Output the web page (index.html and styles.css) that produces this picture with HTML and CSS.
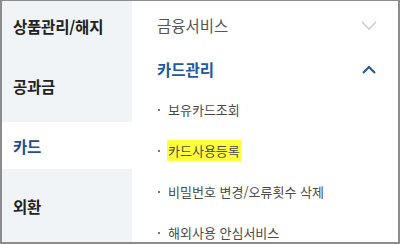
FILE: index.html
```html
<!DOCTYPE html>
<html lang="ko">
<head>
<meta charset="utf-8">
<link rel="stylesheet" href="styles.css">
</head>
<body>
<div class="frame">
  <nav class="side">
    <div class="side-item">상품관리/해지</div>
    <div class="side-item">공과금</div>
    <div class="side-item active">카드</div>
    <div class="side-item">외환</div>
  </nav>
  <section class="main">
    <div class="row">
      <span class="row-title">금융서비스</span>
      <svg class="chev" width="16" height="9" viewBox="0 0 16 9"><polyline points="1,1 8,8 15,1" fill="none" stroke="#c4c7cc" stroke-width="1.4"/></svg>
    </div>
    <div class="row open">
      <span class="row-title">카드관리</span>
      <svg class="chev" width="16" height="9" viewBox="0 0 16 9"><polyline points="2,8 8,2 14,8" fill="none" stroke="#24528f" stroke-width="2"/></svg>
    </div>
    <ul class="sub">
      <li><span class="dot"></span><span>보유카드조회</span></li>
      <li><span class="dot"></span><span class="hl">카드사용등록</span></li>
      <li><span class="dot"></span><span>비밀번호 변경/오류횟수 삭제</span></li>
      <li><span class="dot"></span><span>해외사용 안심서비스</span></li>
    </ul>
  </section>
</div>
</body>
</html>
```
FILE: styles.css
```css
html, body {
  margin: 0;
  padding: 0;
  background: #fff;
}
.frame {
  width: 400px;
  height: 244px;
  box-sizing: border-box;
  border: 2px solid #8c8c8c;
  border-top-width: 1px;
  display: flex;
  overflow: hidden;
  font-family: "Noto Sans CJK KR", "Noto Sans", sans-serif;
}
.side {
  width: 130px;
  flex-shrink: 0;
  background: #f1f4f7;
  display: flex;
  flex-direction: column;
  gap: 13px;
  padding-top: 1px;
}
.side-item {
  flex-shrink: 0;
  height: 47px;
  display: flex;
  align-items: center;
  padding-left: 11px;
  font-size: 15.5px;
  font-weight: 700;
  color: #222;
  letter-spacing: -0.2px;
}
.side-item.active {
  background: #fff;
  color: #1e4d8f;
}
.main {
  flex: 1;
  padding: 0 21px 0 25px;
  display: flex;
  flex-direction: column;
  min-height: 0;
}
.row {
  flex-shrink: 0;
  height: 48px;
  display: flex;
  align-items: center;
  justify-content: space-between;
}
.row.open {
  height: 40px;
}
.row-title {
  font-size: 15.5px;
  color: #555;
}
.row.open .row-title {
  font-weight: 700;
  color: #1f58a3;
}
.sub {
  flex-shrink: 0;
  list-style: none;
  margin: 0;
  padding: 0;
}
.sub li {
  height: 41px;
  display: flex;
  align-items: center;
  font-size: 13px;
  color: #4a4a4a;
}
.dot {
  width: 2px;
  height: 2px;
  background: #777;
  margin: 0 8px 0 1px;
}
.hl {
  background: #ffff3a;
  padding: 1px 1px;
  margin-left: -1px;
}
```
